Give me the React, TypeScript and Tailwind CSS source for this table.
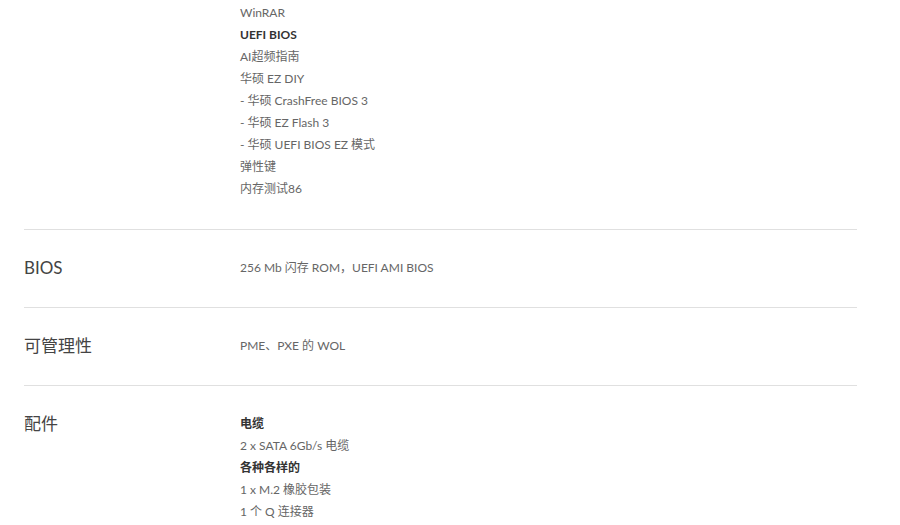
const font = { fontFamily: '"Lato", "Noto Sans CJK SC", sans-serif' };

type Line = { text: string; bold?: boolean };

const rows: { label: string; lines: Line[] }[] = [
  {
    label: "BIOS",
    lines: [{ text: "256 Mb 闪存 ROM，UEFI AMI BIOS" }],
  },
  {
    label: "可管理性",
    lines: [{ text: "PME、PXE 的 WOL" }],
  },
  {
    label: "配件",
    lines: [
      { text: "电缆", bold: true },
      { text: "2 x SATA 6Gb/s 电缆" },
      { text: "各种各样的", bold: true },
      { text: "1 x M.2 橡胶包装" },
      { text: "1 个 Q 连接器" },
    ],
  },
];

const topLines: Line[] = [
  { text: "WinRAR" },
  { text: "UEFI BIOS", bold: true },
  { text: "AI超频指南" },
  { text: "华硕 EZ DIY" },
  { text: "- 华硕 CrashFree BIOS 3" },
  { text: "- 华硕 EZ Flash 3" },
  { text: "- 华硕 UEFI BIOS EZ 模式" },
  { text: "弹性键" },
  { text: "内存测试86" },
];

function Lines({ lines }: { lines: Line[] }) {
  return (
    <div className="flex flex-col">
      {lines.map((l, i) => (
        <div
          key={i}
          className={`text-[12px] leading-[22px] ${l.bold ? "font-bold text-[#333]" : "text-[#666]"}`}
        >
          {l.text}
        </div>
      ))}
    </div>
  );
}

export default function App() {
  return (
    <div className="min-h-[525px] w-[900px] overflow-hidden bg-white" style={font}>
      <div className="ml-[24px] w-[833px] mt-[2px]">
        <div className="flex pb-[29px]">
          <div className="w-[216px]" />
          <Lines lines={topLines} />
        </div>
        {rows.map((r) => (
          <div key={r.label} className="flex border-t border-[#e0e0e0] pt-[27px] pb-[28px]">
            <div className="w-[216px] text-[17px] leading-[22px] text-[#444]">{r.label}</div>
            <Lines lines={r.lines} />
          </div>
        ))}
      </div>
    </div>
  );
}
